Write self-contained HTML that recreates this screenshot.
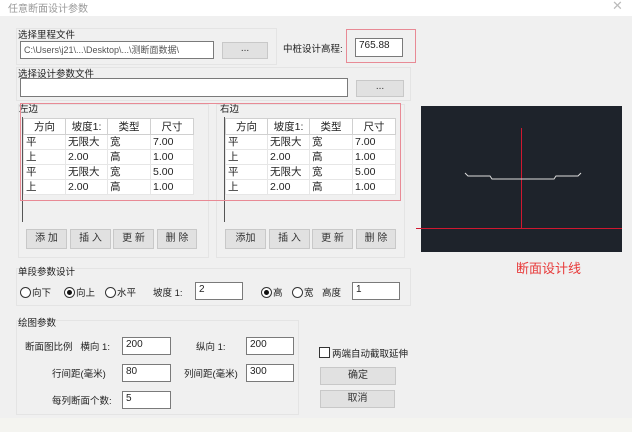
<!DOCTYPE html>
<html><head><meta charset="utf-8"><style>
*{margin:0;padding:0;box-sizing:border-box}
body{width:632px;height:432px;background:#f0f0f0;font-family:"Liberation Sans","Noto Sans CJK SC",sans-serif;font-size:9.5px;color:#222;position:relative;overflow:hidden}
.a{position:absolute;white-space:nowrap}
.tb{position:absolute;left:0;top:0;width:632px;height:16px;background:#fff}
.grp{position:absolute;border:1px solid #e4e4e4;background:#f0f0f0}
.in{position:absolute;background:#fff;border:1px solid #7a7a7a;padding:1px 3px;font-size:10px}
.btn{position:absolute;background:#e1e1e1;border:1px solid #c8c8c8;text-align:center;font-size:10px;color:#333}
.red{position:absolute;border:1px solid #e88a95}
table{position:absolute;border-collapse:collapse;background:#fff;font-size:10.5px;table-layout:fixed}
td{height:15px;border:1px solid #e6e6e6;padding-left:2px;line-height:13px}
th{height:15px;font-weight:normal;border:1px solid #d0d0d0;background:#fff;text-align:center}
.rad{display:inline-block;width:11px;height:11px;border:1px solid #333;border-radius:50%;vertical-align:-2px;position:relative;background:#fff;margin-right:1px}
.rad.on:after{content:"";position:absolute;left:2px;top:2px;width:5px;height:5px;border-radius:50%;background:#111}
</style></head><body>
<div class="tb"></div>
<div class="a" style="left:8px;top:0;color:#999;font-size:10px">任意断面设计参数</div>
<div class="a" style="left:612px;top:-2px;color:#bbb;font-size:13px">✕</div>

<div class="grp" style="left:16px;top:28px;width:261px;height:37px"></div>
<div class="a" style="left:18px;top:27px">选择里程文件</div>
<div class="in" style="left:20px;top:41px;width:194px;height:18px;color:#555;font-size:9px;overflow:hidden">C:\Users\j21\...\Desktop\...\测断面数据\</div>
<div class="btn" style="left:222px;top:42px;width:46px;height:17px">...</div>
<div class="a" style="left:283px;top:41px">中桩设计高程:</div>
<div class="red" style="left:346px;top:29px;width:70px;height:34px"></div>
<div class="in" style="left:355px;top:38px;width:48px;height:19px">765.88</div>

<div class="grp" style="left:16px;top:67px;width:395px;height:34px"></div>
<div class="a" style="left:18px;top:66px">选择设计参数文件</div>
<div class="in" style="left:20px;top:78px;width:328px;height:19px"></div>
<div class="btn" style="left:356px;top:80px;width:48px;height:17px">...</div>

<div class="grp" style="left:18px;top:104px;width:191px;height:154px"></div>
<div class="a" style="left:19px;top:101px">左边</div>
<div class="a" style="left:22px;top:117px;width:1px;height:105px;background:#555"></div>
<table style="left:23px;top:118px;width:170px">
<colgroup><col style="width:42px"><col style="width:42px"><col style="width:43px"><col style="width:43px"></colgroup>
<tr><th>方向</th><th>坡度1:</th><th>类型</th><th>尺寸</th></tr>
<tr><td>平</td><td>无限大</td><td>宽</td><td>7.00</td></tr>
<tr><td>上</td><td>2.00</td><td>高</td><td>1.00</td></tr>
<tr><td>平</td><td>无限大</td><td>宽</td><td>5.00</td></tr>
<tr><td>上</td><td>2.00</td><td>高</td><td>1.00</td></tr>
</table>
<div class="btn" style="left:26px;top:229px;width:41px;height:20px;line-height:18px">添 加</div>
<div class="btn" style="left:70px;top:229px;width:41px;height:20px;line-height:18px">插 入</div>
<div class="btn" style="left:113px;top:229px;width:41px;height:20px;line-height:18px">更 新</div>
<div class="btn" style="left:157px;top:229px;width:40px;height:20px;line-height:18px">删 除</div>

<div class="grp" style="left:216px;top:104px;width:189px;height:154px"></div>
<div class="a" style="left:220px;top:101px">右边</div>
<div class="a" style="left:224px;top:117px;width:1px;height:105px;background:#555"></div>
<table style="left:225px;top:118px;width:170px">
<colgroup><col style="width:42px"><col style="width:42px"><col style="width:43px"><col style="width:43px"></colgroup>
<tr><th>方向</th><th>坡度1:</th><th>类型</th><th>尺寸</th></tr>
<tr><td>平</td><td>无限大</td><td>宽</td><td>7.00</td></tr>
<tr><td>上</td><td>2.00</td><td>高</td><td>1.00</td></tr>
<tr><td>平</td><td>无限大</td><td>宽</td><td>5.00</td></tr>
<tr><td>上</td><td>2.00</td><td>高</td><td>1.00</td></tr>
</table>
<div class="btn" style="left:225px;top:229px;width:41px;height:20px;line-height:18px">添加</div>
<div class="btn" style="left:269px;top:229px;width:41px;height:20px;line-height:18px">插 入</div>
<div class="btn" style="left:312px;top:229px;width:41px;height:20px;line-height:18px">更 新</div>
<div class="btn" style="left:356px;top:229px;width:40px;height:20px;line-height:18px">删 除</div>
<div class="red" style="left:20px;top:103px;width:381px;height:98px"></div>

<div class="a" style="left:421px;top:106px;width:201px;height:146px;background:#1e232b"></div>
<div class="a" style="left:416px;top:228px;width:206px;height:1px;background:#d01830"></div>
<div class="a" style="left:521px;top:128px;width:1px;height:100px;background:#d01830"></div>
<svg class="a" style="left:460px;top:170px" width="125" height="16"><polyline points="5,3 8,6 30,6 32,9 94,9 96,6 118,6 121,3" fill="none" stroke="#ddd" stroke-width="1"/></svg>
<div class="a" style="left:516px;top:258px;color:#e83a3a;font-size:13px">断面设计线</div>

<div class="grp" style="left:16px;top:268px;width:395px;height:38px"></div>
<div class="a" style="left:18px;top:264px">单段参数设计</div>
<div class="a" style="left:20px;top:285px"><span class="rad"></span>向下</div>
<div class="a" style="left:64px;top:285px"><span class="rad on"></span>向上</div>
<div class="a" style="left:105px;top:285px"><span class="rad"></span>水平</div>
<div class="a" style="left:153px;top:285px">坡度 1:</div>
<div class="in" style="left:195px;top:282px;width:48px;height:18px">2</div>
<div class="a" style="left:261px;top:285px"><span class="rad on"></span>高</div>
<div class="a" style="left:292px;top:285px"><span class="rad"></span>宽</div>
<div class="a" style="left:322px;top:285px">高度</div>
<div class="in" style="left:352px;top:282px;width:48px;height:18px">1</div>

<div class="grp" style="left:16px;top:320px;width:283px;height:95px"></div>
<div class="a" style="left:18px;top:315px">绘图参数</div>
<div class="a" style="left:25px;top:339px">断面图比例&nbsp;&nbsp;&nbsp;横向 1:</div>
<div class="in" style="left:122px;top:337px;width:49px;height:18px">200</div>
<div class="a" style="left:196px;top:339px">纵向 1:</div>
<div class="in" style="left:246px;top:337px;width:48px;height:18px">200</div>
<div class="a" style="left:52px;top:366px">行间距(毫米)</div>
<div class="in" style="left:122px;top:364px;width:49px;height:18px">80</div>
<div class="a" style="left:184px;top:366px">列间距(毫米)</div>
<div class="in" style="left:246px;top:364px;width:48px;height:18px">300</div>
<div class="a" style="left:52px;top:393px">每列断面个数:</div>
<div class="in" style="left:122px;top:391px;width:49px;height:18px">5</div>

<div class="a" style="left:319px;top:347px;width:11px;height:11px;border:1px solid #333;background:#fff"></div>
<div class="a" style="left:332px;top:346px">两端自动截取延伸</div>
<div class="btn" style="left:320px;top:367px;width:76px;height:18px;line-height:16px">确定</div>
<div class="btn" style="left:320px;top:390px;width:75px;height:18px;line-height:16px">取消</div>
<div class="a" style="left:0;top:418px;width:632px;height:14px;background:#f4f4f0"></div>
</body></html>
